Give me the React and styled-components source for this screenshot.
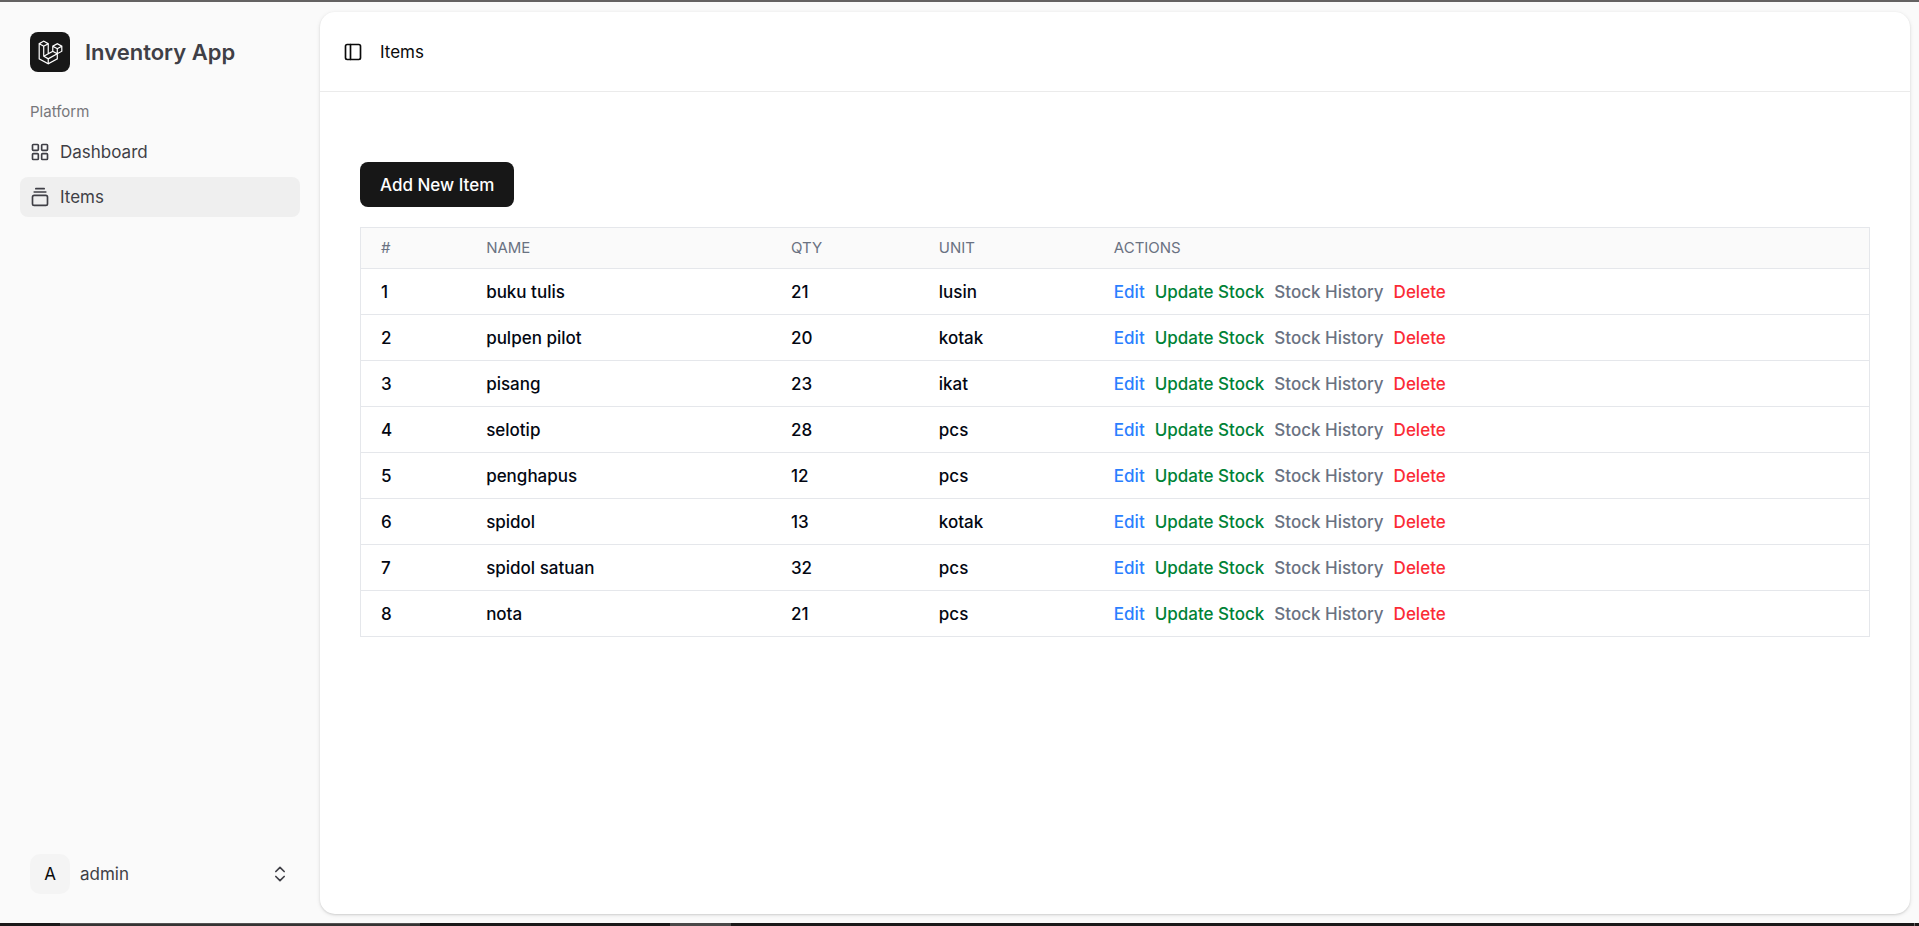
import React from 'react';
import styled, { createGlobalStyle, css } from 'styled-components';
import { ChevronsUpDown, GalleryVerticalEnd, LayoutGrid, PanelLeft } from 'lucide-react';

const GlobalStyle = createGlobalStyle`
  *, *::before, *::after { box-sizing: border-box; }
  body {
    margin: 0;
    background: #fafafa;
    color: #0a0a0a;
    font: 400 17px/26px Inter, "Liberation Sans", sans-serif;
  }
  button { font: inherit; color: inherit; border: 0; background: none; cursor: pointer; }
  a { color: inherit; text-decoration: none; }
`;

const Window = styled.div`
  display: flex;
  flex-direction: column;
  min-height: 100vh;
`;

const TopEdge = styled.div`
  height: 2px;
  background: #646262;
`;

const BottomEdge = styled.div`
  display: flex;
  height: 3px;
  background: #1b1919;
`;

const EdgeSegment = styled.div`
  flex: ${({ $grow }) => $grow} 1 0;
  background: ${({ $color }) => $color || 'transparent'};
  border-top: ${({ $line }) => ($line ? `1px solid ${$line}` : '0')};
`;

const Shell = styled.div`
  flex: 1;
  display: flex;
`;

const Sidebar = styled.aside`
  width: 320px;
  flex: none;
  display: flex;
  flex-direction: column;
  padding: 20px 20px 29px;
  color: #3f3f46;
`;

const Brand = styled.a`
  display: flex;
  align-items: center;
  gap: 15px;
  padding: 10px;
  font-size: 22px;
  line-height: 24px;
  font-weight: 600;
`;

const Logo = styled.span`
  display: grid;
  place-items: center;
  width: 40px;
  height: 40px;
  border-radius: 8px;
  background: #171717;
  color: #fff;
`;

const Nav = styled.nav`
  display: flex;
  flex-direction: column;
  gap: 5px;
  padding-top: 10px;
`;

const NavLabel = styled.div`
  padding: 0 10px;
  margin-bottom: -5px;
  font-size: 15px;
  line-height: 40px;
  color: #77777b;
`;

const NavLink = styled.a`
  display: flex;
  align-items: center;
  gap: 10px;
  height: 40px;
  padding: 0 10px;
  border-radius: 8px;
  ${({ $active }) => $active && css`
    background: #efefef;
  `}
`;

const UserButton = styled.button`
  display: flex;
  align-items: center;
  gap: 10px;
  width: 100%;
  margin-top: auto;
  padding: 0 10px;
  text-align: left;
`;

const Avatar = styled.span`
  display: grid;
  place-items: center;
  width: 40px;
  height: 40px;
  border-radius: 10px;
  background: #f4f4f4;
  color: #0a0a0a;
`;

const UserName = styled.span`
  flex: 1;
`;

const Main = styled.main`
  flex: 1;
  min-width: 0;
  margin: 10px 9px 9px 0;
  border-radius: 15px;
  background: #fff;
  box-shadow: 0 1px 4px rgba(0, 0, 0, 0.1), 0 1px 2px rgba(0, 0, 0, 0.1);
`;

const Header = styled.header`
  display: flex;
  align-items: center;
  gap: 10px;
  height: 80px;
  padding: 0 15px;
  border-bottom: 1px solid #ebebeb;
`;

const IconButton = styled.button`
  display: grid;
  place-items: center;
  width: 35px;
  height: 35px;
  padding: 0;
`;

const Title = styled.h1`
  margin: 0;
  font-size: 17px;
  font-weight: 400;
`;

const Content = styled.section`
  padding: 70px 40px 40px;
`;

const PrimaryButton = styled.button`
  height: 45px;
  padding: 0 20px;
  border-radius: 8px;
  background: #171717;
  color: #fff;
  font-weight: 500;
`;

const Table = styled.table`
  width: 100%;
  margin-top: 20px;
  table-layout: fixed;
  border-collapse: collapse;
  border: 1px solid #e5e7eb;
  font-weight: 500;
  color: #030712;
`;

const Row = styled.tr`
  height: 46px;
  border-bottom: 1px solid #e5e7eb;
`;

const HeadRow = styled(Row)`
  height: 41px;
  background: #fafafa;
`;

const HeadCell = styled.th`
  width: ${({ $width }) => $width || 'auto'};
  padding: 0 20px;
  text-align: left;
  font-size: 15px;
  font-weight: 400;
  line-height: 20px;
  text-transform: uppercase;
  color: #6a7282;
`;

const Cell = styled.td`
  padding: 0 20px;
`;

const Actions = styled.div`
  display: flex;
  gap: 10px;
`;

const ActionLink = styled.a`
  color: ${({ $color }) => $color};
`;

const ActionButton = styled.button`
  padding: 0;
  color: #fb2c36;
`;

const columns = [
  ['#', '7%'],
  ['Name', '20.2%'],
  ['Qty', '9.8%'],
  ['Unit', '11.6%'],
  ['Actions'],
];

const items = [
  ['buku tulis', 21, 'lusin'],
  ['pulpen pilot', 20, 'kotak'],
  ['pisang', 23, 'ikat'],
  ['selotip', 28, 'pcs'],
  ['penghapus', 12, 'pcs'],
  ['spidol', 13, 'kotak'],
  ['spidol satuan', 32, 'pcs'],
  ['nota', 21, 'pcs'],
];

function LogoMark() {
  return (
    <svg width="25" height="25" viewBox="0 0 40 42" fill="currentColor" aria-hidden="true">
      <path
        fillRule="evenodd"
        clipRule="evenodd"
        d="M17.2 5.633 8.6.855 0 5.633v26.51l16.2 9 16.2-9v-8.442l7.6-4.223V9.856l-8.6-4.777-8.6 4.777V18.3l-5.6 3.111V5.633ZM38 18.301l-5.6 3.11v-6.157l5.6-3.11V18.3Zm-1.06-7.856-5.54 3.078-5.54-3.079 5.54-3.078 5.54 3.079ZM24.8 18.3v-6.157l5.6 3.111v6.158L24.8 18.3Zm-1 1.732 5.54 3.078-13.14 7.302-5.54-3.078 13.14-7.3v-.002Zm-16.2 7.89 7.6 4.222V38.3L2 30.966V7.92l5.6 3.111v16.892ZM8.6 9.3 3.06 6.222 8.6 3.143l5.54 3.08L8.6 9.3Zm21.8 15.51-13.2 7.334V38.3l13.2-7.334v-6.156ZM9.6 11.034l5.6-3.11v14.6l-5.6 3.11v-14.6Z"
      />
    </svg>
  );
}

export default function App() {
  return (
    <>
      <GlobalStyle />
      <Window>
        <TopEdge />
        <Shell>
          <Sidebar>
            <Brand href="#">
              <Logo><LogoMark /></Logo>
              Inventory App
            </Brand>
            <Nav aria-label="Platform">
              <NavLabel>Platform</NavLabel>
              <NavLink href="#dashboard">
                <LayoutGrid size={20} />
                Dashboard
              </NavLink>
              <NavLink href="#items" $active aria-current="page">
                <GalleryVerticalEnd size={20} />
                Items
              </NavLink>
            </Nav>
            <UserButton type="button">
              <Avatar>A</Avatar>
              <UserName>admin</UserName>
              <ChevronsUpDown size={20} />
            </UserButton>
          </Sidebar>
          <Main>
            <Header>
              <IconButton type="button" aria-label="Toggle sidebar">
                <PanelLeft size={20} />
              </IconButton>
              <Title>Items</Title>
            </Header>
            <Content>
              <PrimaryButton type="button">Add New Item</PrimaryButton>
              <Table>
                <thead>
                  <HeadRow>
                    {columns.map(([label, width]) => (
                      <HeadCell key={label} scope="col" $width={width}>{label}</HeadCell>
                    ))}
                  </HeadRow>
                </thead>
                <tbody>
                  {items.map(([name, qty, unit], index) => (
                    <Row key={name}>
                      <Cell>{index + 1}</Cell>
                      <Cell>{name}</Cell>
                      <Cell>{qty}</Cell>
                      <Cell>{unit}</Cell>
                      <Cell>
                        <Actions>
                          <ActionLink href="#edit" $color="#2b7fff">Edit</ActionLink>
                          <ActionLink href="#stock" $color="#008236">Update Stock</ActionLink>
                          <ActionLink href="#history" $color="#6a7282">Stock History</ActionLink>
                          <ActionButton type="button">Delete</ActionButton>
                        </Actions>
                      </Cell>
                    </Row>
                  ))}
                </tbody>
              </Table>
            </Content>
          </Main>
        </Shell>
        <BottomEdge>
          <EdgeSegment $grow={60} />
          <EdgeSegment $grow={360} $color="#353333" $line="#555353" />
          <EdgeSegment $grow={250} />
          <EdgeSegment $grow={61} $color="#4a4848" />
          <EdgeSegment $grow={1183} />
          <EdgeSegment $grow={1} $color="#6a6868" />
          <EdgeSegment $grow={4} />
        </BottomEdge>
      </Window>
    </>
  );
}
